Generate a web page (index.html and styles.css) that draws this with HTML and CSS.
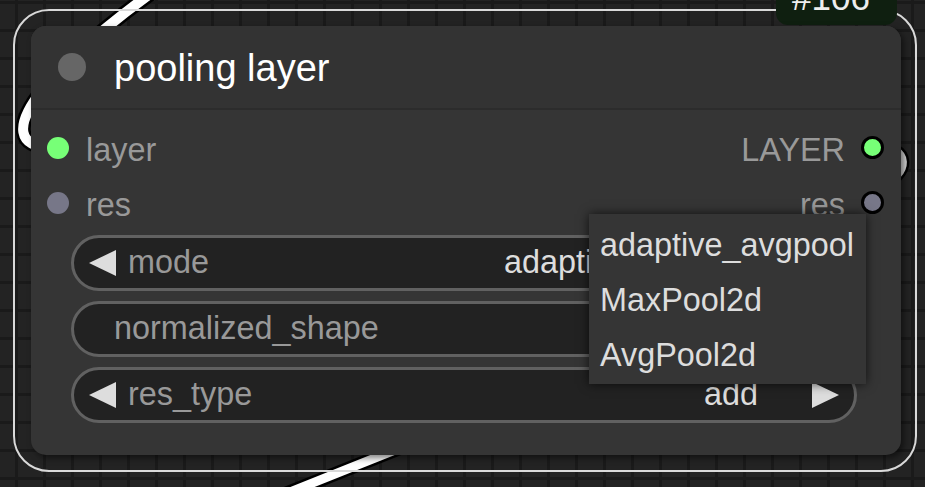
FILE: index.html
```html
<!DOCTYPE html>
<html>
<head>
<meta charset="utf-8">
<link rel="stylesheet" href="styles.css">
</head>
<body>
<div class="canvas">
  <svg class="links" width="925" height="487" viewBox="0 0 925 487">
    <g fill="none" stroke-linecap="round">
      <path d="M200 -40 C60 50 -30 150 58 148" stroke="#000" stroke-width="15"/>
      <path d="M200 -40 C60 50 -30 150 58 148" stroke="#fff" stroke-width="10"/>
      <path d="M872 147 C913 146 908 175 880 185" stroke="#000" stroke-width="15"/>
      <path d="M872 147 C913 146 908 175 880 185" stroke="#ddd" stroke-width="10"/>
      <path d="M430 436 L250 508" stroke="#000" stroke-width="14"/>
      <path d="M430 436 L250 508" stroke="#fff" stroke-width="9"/>
    </g>
  </svg>
  <div class="selection"></div>
  <div class="badge">#106</div>
  <div class="node">
    <div class="title">
      <span class="collapse-dot"></span>
      <span class="title-text">pooling layer</span>
    </div>
    <div class="slots">
      <div class="slot-row">
        <div class="in"><span class="dot on"></span><span class="slot-label">layer</span></div>
        <div class="out"><span class="slot-label">LAYER</span><span class="dot on"></span></div>
      </div>
      <div class="slot-row">
        <div class="in"><span class="dot off"></span><span class="slot-label">res</span></div>
        <div class="out"><span class="slot-label">res</span><span class="dot off"></span></div>
      </div>
    </div>
    <div class="widgets">
      <div class="widget combo">
        <svg class="arrow" viewBox="0 0 27 26"><polygon points="27,0 27,26 0,13" fill="#ddd"/></svg>
        <span class="w-label">mode</span>
        <span class="w-value">adaptive_avgpool</span>
        <svg class="arrow" viewBox="0 0 27 26"><polygon points="0,0 0,26 27,13" fill="#ddd"/></svg>
      </div>
      <div class="widget text-w">
        <span class="w-label">normalized_shape</span>
      </div>
      <div class="widget combo">
        <svg class="arrow" viewBox="0 0 27 26"><polygon points="27,0 27,26 0,13" fill="#ddd"/></svg>
        <span class="w-label">res_type</span>
        <span class="w-value">add</span>
        <svg class="arrow" viewBox="0 0 27 26"><polygon points="0,0 0,26 27,13" fill="#ddd"/></svg>
      </div>
    </div>
  </div>
  <div class="menu">
    <div class="menu-item">adaptive_avgpool</div>
    <div class="menu-item">MaxPool2d</div>
    <div class="menu-item">AvgPool2d</div>
  </div>
</div>
</body>
</html>
```
FILE: styles.css
```css
html, body {
  margin: 0;
  width: 925px;
  height: 487px;
  overflow: hidden;
}
body {
  background-color: #232323;
  background-image:
    linear-gradient(to right, #1a1a1a 3px, transparent 3px),
    linear-gradient(to bottom, #1a1a1a 3px, transparent 3px);
  background-size: 28px 28px;
  background-position: 15px 1px;
  font-family: "Liberation Sans", Arial, sans-serif;
}
.canvas {
  position: relative;
  width: 925px;
  height: 487px;
}
.links {
  position: absolute;
  left: 0;
  top: 0;
}
.selection {
  position: absolute;
  left: 13px;
  top: 9px;
  width: 904px;
  height: 463px;
  box-sizing: border-box;
  border: 2px solid #d9d9d9;
  border-radius: 36px;
}
.badge {
  position: absolute;
  left: 776px;
  top: -22px;
  width: 121px;
  height: 47px;
  box-sizing: border-box;
  padding-left: 16px;
  background: #0f1f10;
  border-radius: 12px;
  color: #eee;
  font-size: 35px;
  line-height: normal;
}
.node {
  position: absolute;
  left: 31px;
  top: 26px;
  width: 870px;
  height: 429px;
  background: #353535;
  border-radius: 15px;
  box-shadow: 3px 3px 6px rgba(0, 0, 0, 0.5);
  display: flex;
  flex-direction: column;
}
.title {
  height: 79px;
  padding: 3px 0 0 27px;
  border-bottom: 2px solid #2c2c2c;
  background: #333;
  border-radius: 15px 15px 0 0;
  display: flex;
  align-items: center;
}
.collapse-dot {
  width: 28px;
  height: 28px;
  border-radius: 50%;
  background: #666;
  margin-bottom: 3px;
  flex: none;
}
.title-text {
  margin-left: 28px;
  font-size: 38px;
  color: #fff;
}
.slots {
  padding-top: 10px;
}
.slot-row {
  height: 55px;
  display: flex;
  justify-content: space-between;
  align-items: center;
}
.in {
  display: flex;
  align-items: center;
  padding-left: 16px;
  gap: 17px;
}
.out {
  display: flex;
  align-items: center;
  padding-right: 17px;
  gap: 16px;
}
.dot {
  width: 22px;
  height: 22px;
  border-radius: 50%;
  flex: none;
}
.dot.on { background: #7f7; }
.dot.off { background: #778; }
.out .dot {
  box-sizing: border-box;
  width: 23px;
  height: 23px;
  border: 3px solid #000;
}
.slot-label {
  font-size: 32.4px;
  color: #999;
  padding-top: 5px;
}
.widgets {
  display: flex;
  flex-direction: column;
  gap: 10px;
  margin-top: 4.5px;
  padding: 0 44px 0 40px;
}
.widget {
  height: 56px;
  box-sizing: border-box;
  border: 3px solid #616161;
  border-radius: 28px;
  background: #222;
  display: flex;
  align-items: center;
  font-size: 32.4px;
}
.combo {
  padding: 0 15px;
}
.text-w {
  padding-left: 40px;
}
.arrow {
  width: 27px;
  height: 26px;
  flex: none;
}
.w-label {
  color: #999;
}
.combo .w-label {
  margin-left: 12px;
}
.w-value {
  margin-left: auto;
  margin-right: 54px;
  color: #ddd;
}
.menu {
  position: absolute;
  left: 589px;
  top: 214px;
  width: 277px;
  height: 170px;
  box-sizing: border-box;
  padding-top: 4px;
  background: #353535;
  box-shadow: 0 0 10px rgba(0, 0, 0, 0.7);
}
.menu-item {
  height: 55px;
  line-height: 55px;
  padding-left: 11px;
  font-size: 32.4px;
  color: #ddd;
  white-space: nowrap;
}
```
